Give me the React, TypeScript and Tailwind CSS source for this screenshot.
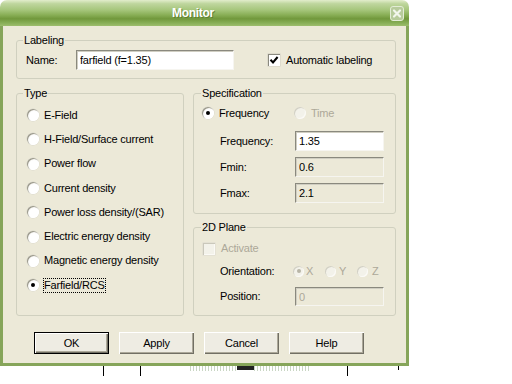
import clsx from 'clsx';

function Radio({ checked, disabled, small }: { checked?: boolean; disabled?: boolean; small?: boolean }) {
  return (
    <span
      className={clsx(
        'rounded-full flex items-center justify-center shrink-0',
        small ? 'w-[11px] h-[11px]' : 'w-[12px] h-[12px]',
        disabled
          ? 'bg-[#f3f2ea] shadow-[inset_1px_1px_0_#d2d0c4,inset_-1px_-1px_0_#fbfaf6]'
          : 'bg-[radial-gradient(circle_at_60%_60%,#ffffff_45%,#e2e0d6_100%)] shadow-[inset_1px_1px_0_#9a988a,inset_-1px_-1px_0_#ffffff,0_0_0_0.5px_#d8d6cb]'
      )}
    >
      {checked && (
        <span className={clsx('w-[4px] h-[4px] rounded-full', disabled ? 'bg-[#b8b5a6]' : 'bg-black')} />
      )}
    </span>
  );
}

function Field({ value, white, muted, h = 'h-[20px]' }: { value: string; white?: boolean; muted?: boolean; h?: string }) {
  return (
    <input
      readOnly
      value={value}
      className={clsx(
        'w-[89px] pl-[3px] outline-none border border-t-[#8a897e] border-l-[#8a897e] border-b-[#f6f5f0] border-r-[#f6f5f0] shadow-[inset_1px_1px_0_#d0cec2]',
        h,
        white ? 'bg-white' : 'bg-[#ece9d8]',
        muted ? 'text-[#aca899]' : 'text-black'
      )}
    />
  );
}

function Button({ label, primary }: { label: string; primary?: boolean }) {
  return (
    <button
      className={clsx(
        'w-[75px] h-[22px] bg-[#eeece3] flex items-center justify-center',
        primary
          ? 'border border-black shadow-[inset_1px_1px_0_#ffffff,inset_-1px_-1px_0_#716f64,inset_-2px_-2px_0_#aca899]'
          : 'shadow-[inset_1px_1px_0_#ffffff,inset_-1px_-1px_0_#716f64,inset_-2px_-2px_0_#aca899]'
      )}
    >
      {label}
    </button>
  );
}

const types = [
  'E-Field',
  'H-Field/Surface current',
  'Power flow',
  'Current density',
  'Power loss density/(SAR)',
  'Electric energy density',
  'Magnetic energy density',
];

export default function App() {
  return (
    <div className="w-[512px] h-[384px] bg-white overflow-hidden font-['Liberation_Sans',Arial,sans-serif] text-[11px] tracking-[-0.2px] text-black leading-[13px]">
      <div className="w-[409px] flex flex-col">
        {/* Title bar */}
        <div className="h-[26px] rounded-t-[7px] flex items-center bg-[linear-gradient(to_bottom,#e2edcc_0%,#bfd69e_14%,#a6c67c_38%,#88ae55_58%,#71983c_72%,#87ae56_88%,#9dbd6d_100%)]">
          <span className="ml-[172px] text-white font-bold text-[12px] tracking-[-0.3px] [text-shadow:1px_1px_0_#5f7f34]">
            Monitor
          </span>
          <div className="flex-1 flex justify-end pr-[5px]">
            <svg width="14" height="15" viewBox="0 0 14 15">
              <rect x="0.5" y="0.5" width="13" height="14" rx="2.5" fill="#b7cb9b" stroke="#e3ecd6" />
              <path d="M4 4.5 L10 10.5 M10 4.5 L4 10.5" stroke="#f2f6ec" strokeWidth="2.2" strokeLinecap="round" />
            </svg>
          </div>
        </div>

        {/* Body */}
        <div className="h-[340px] bg-[#ece9d8] border-x-[3px] border-b-[3px] border-[#86a55a] pt-[8px] pl-[13px]">
          {/* Labeling */}
          <fieldset className="w-[380px] h-[45px] border border-[#d0d0bf] rounded-[3px]">
            <legend className="ml-[6px] px-[1px] leading-[13px]">Labeling</legend>
            <div className="mt-[3px] h-[20px] flex items-center pl-[9px]">
              <span className="w-[50px]">Name:</span>
              <input
                readOnly
                value="farfield (f=1.35)"
                className="w-[158px] h-[20px] pl-[3px] bg-white outline-none border border-t-[#8a897e] border-l-[#8a897e] border-b-[#f6f5f0] border-r-[#f6f5f0] shadow-[inset_1px_1px_0_#d0cec2]"
              />
              <span className="ml-[34px] w-[12px] h-[12px] bg-white flex items-center justify-center shadow-[inset_1px_1px_0_#8a897e,inset_-1px_-1px_0_#ffffff,0_0_0_0.5px_#cfcdc1]">
                <svg width="10" height="10" viewBox="0 0 10 10">
                  <path d="M1.5 4.8 L4 7.5 L8.6 2" fill="none" stroke="#000" strokeWidth="2" />
                </svg>
              </span>
              <span className="ml-[6px]">Automatic labeling</span>
            </div>
          </fieldset>

          <div className="mt-[8px] flex">
            {/* Type */}
            <fieldset className="w-[168px] h-[229px] border border-[#d0d0bf] rounded-[3px]">
              <legend className="ml-[6px] px-[1px] leading-[13px]">Type</legend>
              <div className="mt-[3px] flex flex-col pl-[10px]">
                {types.map((t) => (
                  <div key={t} className="h-[24.3px] flex items-center gap-[5px]">
                    <Radio />
                    <span>{t}</span>
                  </div>
                ))}
                <div className="h-[24.3px] flex items-center gap-[4px]">
                  <Radio checked />
                  <span className="border border-dotted border-black px-[0px] leading-[13px]">Farfield/RCS</span>
                </div>
              </div>
            </fieldset>

            <div className="ml-[9px] flex flex-col">
              {/* Specification */}
              <fieldset className="w-[203px] h-[127px] border border-[#d0d0bf] rounded-[3px]">
                <legend className="ml-[7px] px-[1px] leading-[13px]">Specification</legend>
                <div className="mt-[5px] h-[16px] flex items-center pl-[8px]">
                  <div className="w-[92px] flex items-center gap-[5px]">
                    <Radio checked />
                    <span>Frequency</span>
                  </div>
                  <div className="flex items-center gap-[5px] text-[#aca899]">
                    <Radio disabled />
                    <span>Time</span>
                  </div>
                </div>
                <div className="mt-[10px] flex flex-col gap-[6px] pl-[26px]">
                  <div className="h-[20px] flex items-center">
                    <span className="w-[75px]">Frequency:</span>
                    <Field value="1.35" white />
                  </div>
                  <div className="h-[20px] flex items-center">
                    <span className="w-[75px]">Fmin:</span>
                    <Field value="0.6" />
                  </div>
                  <div className="h-[20px] flex items-center">
                    <span className="w-[75px]">Fmax:</span>
                    <Field value="2.1" />
                  </div>
                </div>
              </fieldset>

              {/* 2D Plane */}
              <fieldset className="mt-[7px] w-[203px] h-[95px] border border-[#d0d0bf] rounded-[3px]">
                <legend className="ml-[7px] px-[1px] leading-[13px]">2D Plane</legend>
                <div className="mt-[8px] h-[13px] flex items-center pl-[9px] text-[#aca899]">
                  <span className="w-[12px] h-[12px] bg-[#f3f2ea] shadow-[inset_1px_1px_0_#cac8bb,inset_-1px_-1px_0_#fbfaf6,0_0_0_0.5px_#dcdacf]" />
                  <span className="ml-[6px]">Activate</span>
                </div>
                <div className="mt-[8px] h-[16px] flex items-center pl-[26px]">
                  <span className="w-[73px]">Orientation:</span>
                  <div className="w-[32px] flex items-center gap-[2px] text-[#aca899]">
                    <Radio small checked disabled />
                    <span>X</span>
                  </div>
                  <div className="w-[32px] flex items-center gap-[3px] text-[#aca899]">
                    <Radio small disabled />
                    <span>Y</span>
                  </div>
                  <div className="flex items-center gap-[4px] text-[#aca899]">
                    <Radio small disabled />
                    <span>Z</span>
                  </div>
                </div>
                <div className="mt-[8px] h-[19px] flex items-center pl-[26px]">
                  <span className="w-[75px]">Position:</span>
                  <Field value="0" muted h="h-[19px]" />
                </div>
              </fieldset>
            </div>
          </div>

          {/* Buttons */}
          <div className="mt-[16px] flex gap-[10px] pl-[18px]">
            <Button label="OK" primary />
            <Button label="Apply" />
            <Button label="Cancel" />
            <Button label="Help" />
          </div>
        </div>
      </div>

      {/* Window behind the dialog */}
      <div className="flex items-start h-[18px]">
        <div className="w-[103px]" />
        <div className="w-px h-[10px] bg-black" />
        <div className="w-[36px]" />
        <div className="w-px h-[10px] bg-black" />
        <div className="w-[49px]" />
        <div className="w-[47px] h-[5px] bg-[repeating-linear-gradient(to_right,#c9d6c4_0px,#c9d6c4_1px,#ffffff_1px,#ffffff_3px)]" />
        <div className="w-[17px] h-[4px] bg-[#222]" />
        <div className="w-[56px] h-[5px] bg-[repeating-linear-gradient(to_right,#c9d6c4_0px,#c9d6c4_1px,#ffffff_1px,#ffffff_3px)]" />
        <div className="w-[37px]" />
        <div className="w-px h-[10px] bg-black" />
        <div className="w-[50px]" />
        <div className="w-px h-[4px] bg-black" />
      </div>
    </div>
  );
}
